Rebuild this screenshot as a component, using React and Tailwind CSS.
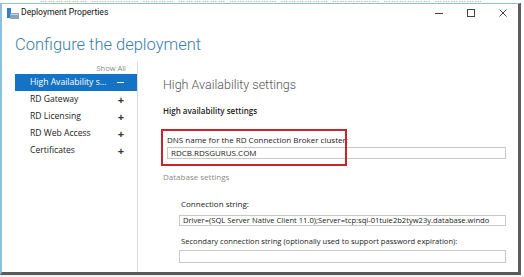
export default function App() {
  const font = { fontFamily: '"Open Sans", "Noto Sans", Arial, sans-serif' };
  const roboto = { fontFamily: 'Roboto, "Open Sans", Arial, sans-serif' };
  const navItems = ["RD Gateway", "RD Licensing", "RD Web Access", "Certificates"];
  return (
    <div className="w-[524px] h-[277px] bg-white overflow-hidden relative" style={font}>
      {/* faint edge of the window behind */}
      <div className="h-[3px] overflow-hidden bg-white">
        <div className="text-[9px] leading-[9px] text-[#9aa4b0] whitespace-nowrap -mt-[6px] pl-[40px] tracking-[1px]">
          ……………… ……………… ………… ……………… ……………… ……………… ……………… ……………… ………………
        </div>
      </div>
      <div className="w-[521px] h-[272px] border-t border-l-2 border-[#8fbfe3] border-b-[3px] border-b-[#5a5a5a] border-r-[3px] border-r-[#5c5c5c] flex flex-col bg-white">
        {/* title bar */}
        <div className="h-[17px] flex items-center pl-[5px] pr-[11px]">
          <svg width="12" height="11" viewBox="0 0 12 11" className="mt-[1px]">
            <rect x="0" y="0" width="4" height="10" fill="#2f7fd0" />
            <rect x="3" y="5" width="9" height="6" fill="#8fa3b8" />
            <rect x="4" y="6" width="7" height="1" fill="#c9d4df" />
          </svg>
          <span className="ml-[2px] text-[8.6px] text-[#111] leading-none" style={roboto}>Deployment Properties</span>
          <div className="ml-auto flex items-center gap-[24px] text-[#333]">
            <svg width="8" height="8" viewBox="0 0 8 8"><line x1="0" y1="4.5" x2="8" y2="4.5" stroke="#444" strokeWidth="1" /></svg>
            <svg width="8" height="8" viewBox="0 0 8 8"><rect x="0.5" y="0.5" width="7" height="7" fill="none" stroke="#444" strokeWidth="1" /></svg>
            <svg width="8" height="8" viewBox="0 0 8 8"><path d="M0.5 0.5 L7.5 7.5 M7.5 0.5 L0.5 7.5" stroke="#444" strokeWidth="1" /></svg>
          </div>
        </div>
        {/* heading */}
        <div className="pl-[13px] pt-[11px] text-[16.5px] leading-[26px] font-light text-[#3b7ea6]" style={roboto}>
          Configure the deployment
        </div>
        {/* body */}
        <div className="flex flex-1 mt-[4px]">
          <div className="w-[135px] flex flex-col pl-[13px] pt-[2px]">
            <div className="text-right pr-[11px] text-[7.5px] leading-[9px] text-[#8a8a8a]">Show All</div>
            <div className="mt-[1px] h-[17px] bg-[#1573c5] flex items-center pl-[15px] pr-[13px] text-white text-[8.6px]">
              <span>High Availability s...</span>
              <span className="ml-auto w-[7px] h-[1.5px] bg-white"></span>
            </div>
            {navItems.map((t) => (
              <div key={t} className="h-[17px] flex items-center pl-[15px] pr-[13px] text-[8.6px] text-[#222]">
                <span>{t}</span>
                <span className="ml-auto text-[11px] font-bold leading-none text-[#333]">+</span>
              </div>
            ))}
          </div>
          <div className="w-px bg-[#dcdcdc]"></div>
          <div className="flex-1 pl-[25px] pt-[14px] relative">
            <div className="text-[12.5px] leading-[18px] text-[#555] font-light" style={roboto}>High Availability settings</div>
            <div className="mt-[12px] text-[8px] leading-[10px] font-semibold text-[#222]">High availability settings</div>
            <div className="mt-[19px] pl-[4px] pr-[12px]">
              <div className="text-[8px] leading-[10px] text-[#222]">DNS name for the RD Connection Broker cluster:</div>
              <div className="mt-[2px] h-[12px] border border-[#c8c8c8] flex items-center pl-[3px] text-[8px] text-[#222] leading-none">
                RDCB.RDSGURUS.COM
              </div>
            </div>
            <div className="mt-[13px] text-[8px] leading-[10px] text-[#8a8a8a]">Database settings</div>
            <div className="mt-[17px] pl-[16px] pr-[12px]">
              <div className="text-[8px] leading-[10px] text-[#222] pl-[2px]">Connection string:</div>
              <div className="mt-[6px] h-[11px] border border-[#c8c8c8] flex items-center pl-[3px] text-[7.6px] text-[#222] leading-none whitespace-nowrap overflow-hidden">
                Driver=(SQL Server Native Client 11.0);Server=tcp:sql-01tuie2b2tyw23y.database.windo
              </div>
              <div className="mt-[10px] text-[7.6px] leading-[10px] text-[#222] pl-[2px] whitespace-nowrap">
                Secondary connection string (optionally used to support password expiration):
              </div>
              <div className="mt-[4px] h-[13px] border border-[#c8c8c8]"></div>
            </div>
            {/* red annotation box */}
            <div className="absolute left-[23px] top-[67px] w-[186px] h-[37px] border-2 border-[#c9232d]"></div>
          </div>
        </div>
      </div>
      <div className="h-[2px] bg-[#f2f2f2]"></div>
    </div>
  );
}
